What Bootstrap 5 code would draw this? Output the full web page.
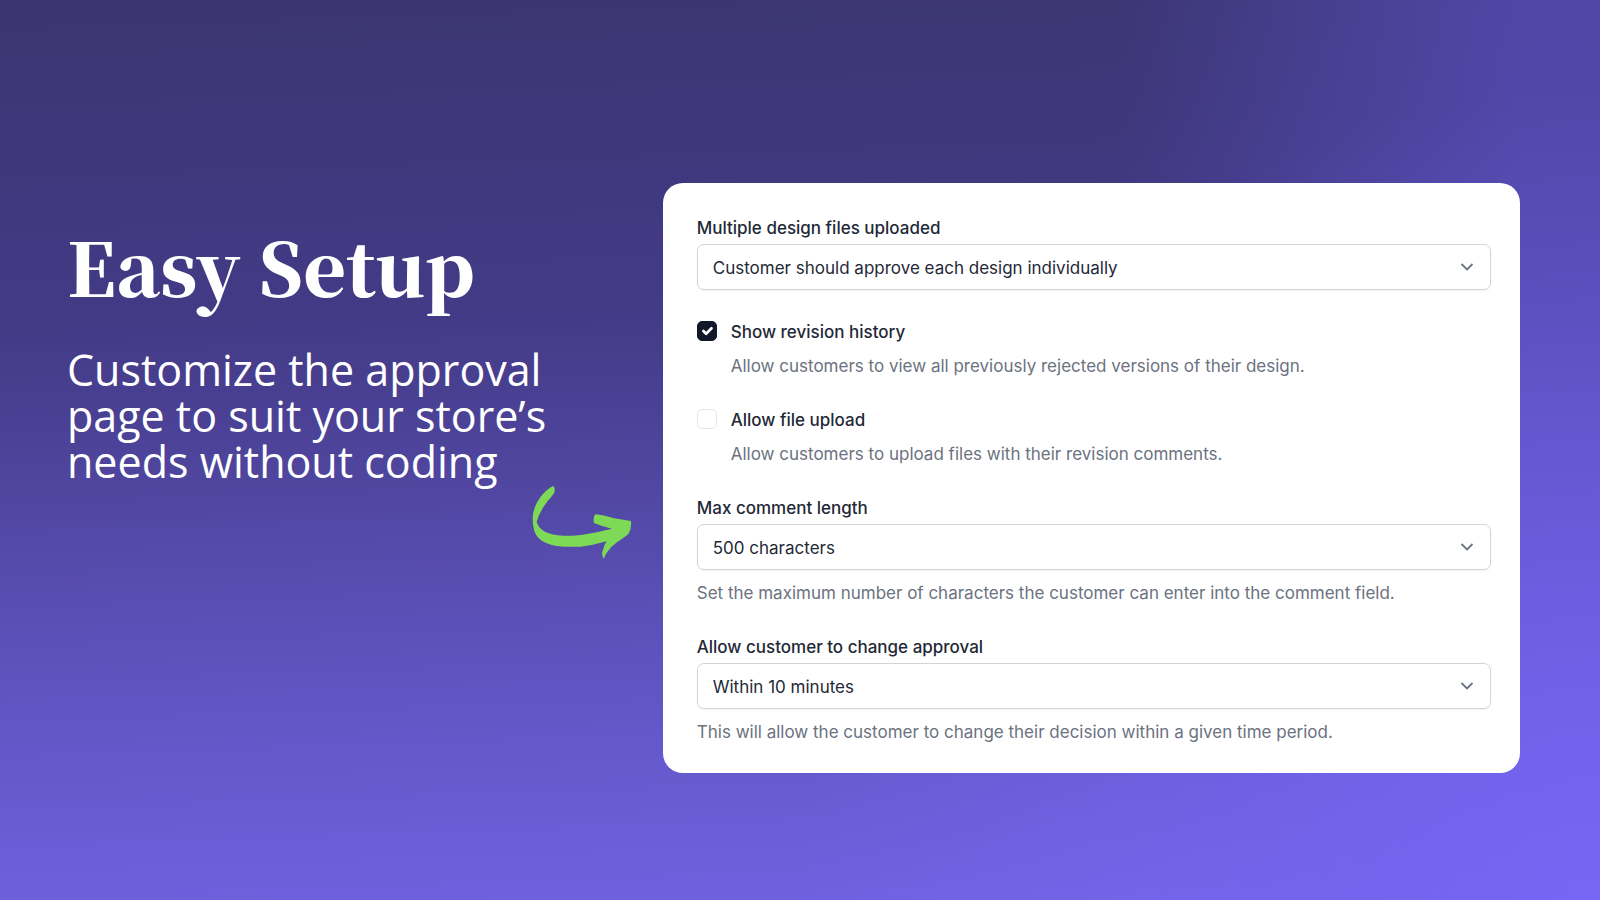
<!DOCTYPE html>
<html lang="en">
<head>
<meta charset="utf-8">
<meta name="viewport" content="width=device-width, initial-scale=1">
<title>Easy Setup</title>
<link href="https://cdn.jsdelivr.net/npm/bootstrap@5.3.0/dist/css/bootstrap.min.css" rel="stylesheet">
<style>
  body {
    font-family: Inter, "Liberation Sans", sans-serif;
    font-size: 17px;
    line-height: 24px;
    color: #1f2937;
    background:
      radial-gradient(ellipse 50% 90% at 100% 100%, rgba(124,106,255,.7), rgba(124,106,255,0)),
      linear-gradient(90deg, rgba(98,88,214,0) 70%, rgba(98,88,214,.25) 82%, rgba(98,88,214,.5) 95%),
      linear-gradient(178deg, #3b3672 0%, #3e377a 15%, #443b88 36%, #5349a6 56%, #6256c6 76%, #7163e2 100%);
    background-attachment: fixed;
  }
  .hero { padding: 56px 80px 0 67px; }
  .intro { padding-top: 31px; }
  .intro h1 {
    font: 900 73px/104px "Noto Serif CJK JP", "Liberation Serif", serif;
    margin: 0 0 29px;
  }
  .tagline { font: 400 43px/46px "Open Sans", sans-serif; margin: 0; }
  .arrow { margin: 0 31px 0 0; }
  .settings { flex: 0 0 59%; border-radius: 20px; padding: 33px 29px 29px 34px; }
  .settings label { font-weight: 500; }
  .settings .form-select {
    height: 46px;
    margin-top: 4px;
    padding: 4px 48px 0 15px;
    font-size: 17px;
    color: #1f2937;
    border: 1px solid #d1d5db;
    border-radius: 7px;
    box-shadow: 0 1px 2px rgba(0,0,0,.05);
    background-image: url("data:image/svg+xml,%3Csvg xmlns='http://www.w3.org/2000/svg' viewBox='0 0 14 8'%3E%3Cpath d='M1.5 1 7 6.5 12.5 1' fill='none' stroke='%236b7280' stroke-width='1.8'/%3E%3C/svg%3E");
    background-size: 14px 8px;
    background-position: right 16px center;
  }
  .hint { color: #6b7280; margin: 11px 0 0; }
  .field { margin-bottom: 30px; }
  .tick { display: grid; grid-template-columns: 20px 1fr; column-gap: 14px; }
  .tick .form-check-input {
    width: 20px; height: 20px; margin: 1px 0 0;
    border: 1px solid #e5e7eb; border-radius: 5px;
  }
  .tick .form-check-input:checked { background-color: #111827; border-color: #111827; }
  .tick .hint { grid-column: 2; margin-top: 10px; }
</style>
</head>
<body>
<main class="hero min-vh-100 d-flex align-items-center">
  <div class="d-flex w-100 align-items-start">
    <section class="intro flex-fill d-flex flex-column text-white">
      <h1>Easy Setup</h1>
      <p class="tagline">Customize the approval<br>page to suit your store’s<br>needs without coding</p>
      <svg class="arrow align-self-end" width="100" height="74" viewBox="36 48 300 222" aria-hidden="true">
        <path fill="#7ed957" d="M99 51Q107 58 103 71Q96 81 83 96Q58 129 50 158C57 184 83 198 130 200C180 202 229 190 276 179Q245 172 222 162Q218 144 226 136Q248 138 282 148L333 156Q335 180 326 194C313 206 285 220 267 242Q257 253 251 270Q243 256 249 243Q252 228 260 217Q220 229 181 233Q134 235 106 230C70 224 50 207 43 186Q32 146 45 114C57 84 79 61 99 51Z"/>
      </svg>
    </section>

    <form class="settings bg-white">
      <div class="field">
        <label for="files" class="d-block">Multiple design files uploaded</label>
        <select id="files" class="form-select"><option>Customer should approve each design individually</option></select>
      </div>
      <div class="field tick">
        <input id="history" class="form-check-input" type="checkbox" checked>
        <label for="history">Show revision history</label>
        <p class="hint">Allow customers to view all previously rejected versions of their design.</p>
      </div>
      <div class="field tick">
        <input id="upload" class="form-check-input" type="checkbox">
        <label for="upload">Allow file upload</label>
        <p class="hint">Allow customers to upload files with their revision comments.</p>
      </div>
      <div class="field">
        <label for="length" class="d-block">Max comment length</label>
        <select id="length" class="form-select"><option>500 characters</option></select>
        <p class="hint">Set the maximum number of characters the customer can enter into the comment field.</p>
      </div>
      <div>
        <label for="change" class="d-block">Allow customer to change approval</label>
        <select id="change" class="form-select"><option>Within 10 minutes</option></select>
        <p class="hint">This will allow the customer to change their decision within a given time period.</p>
      </div>
    </form>
  </div>
</main>
<script src="https://cdn.jsdelivr.net/npm/bootstrap@5.3.0/dist/js/bootstrap.bundle.min.js"></script>
</body>
</html>
